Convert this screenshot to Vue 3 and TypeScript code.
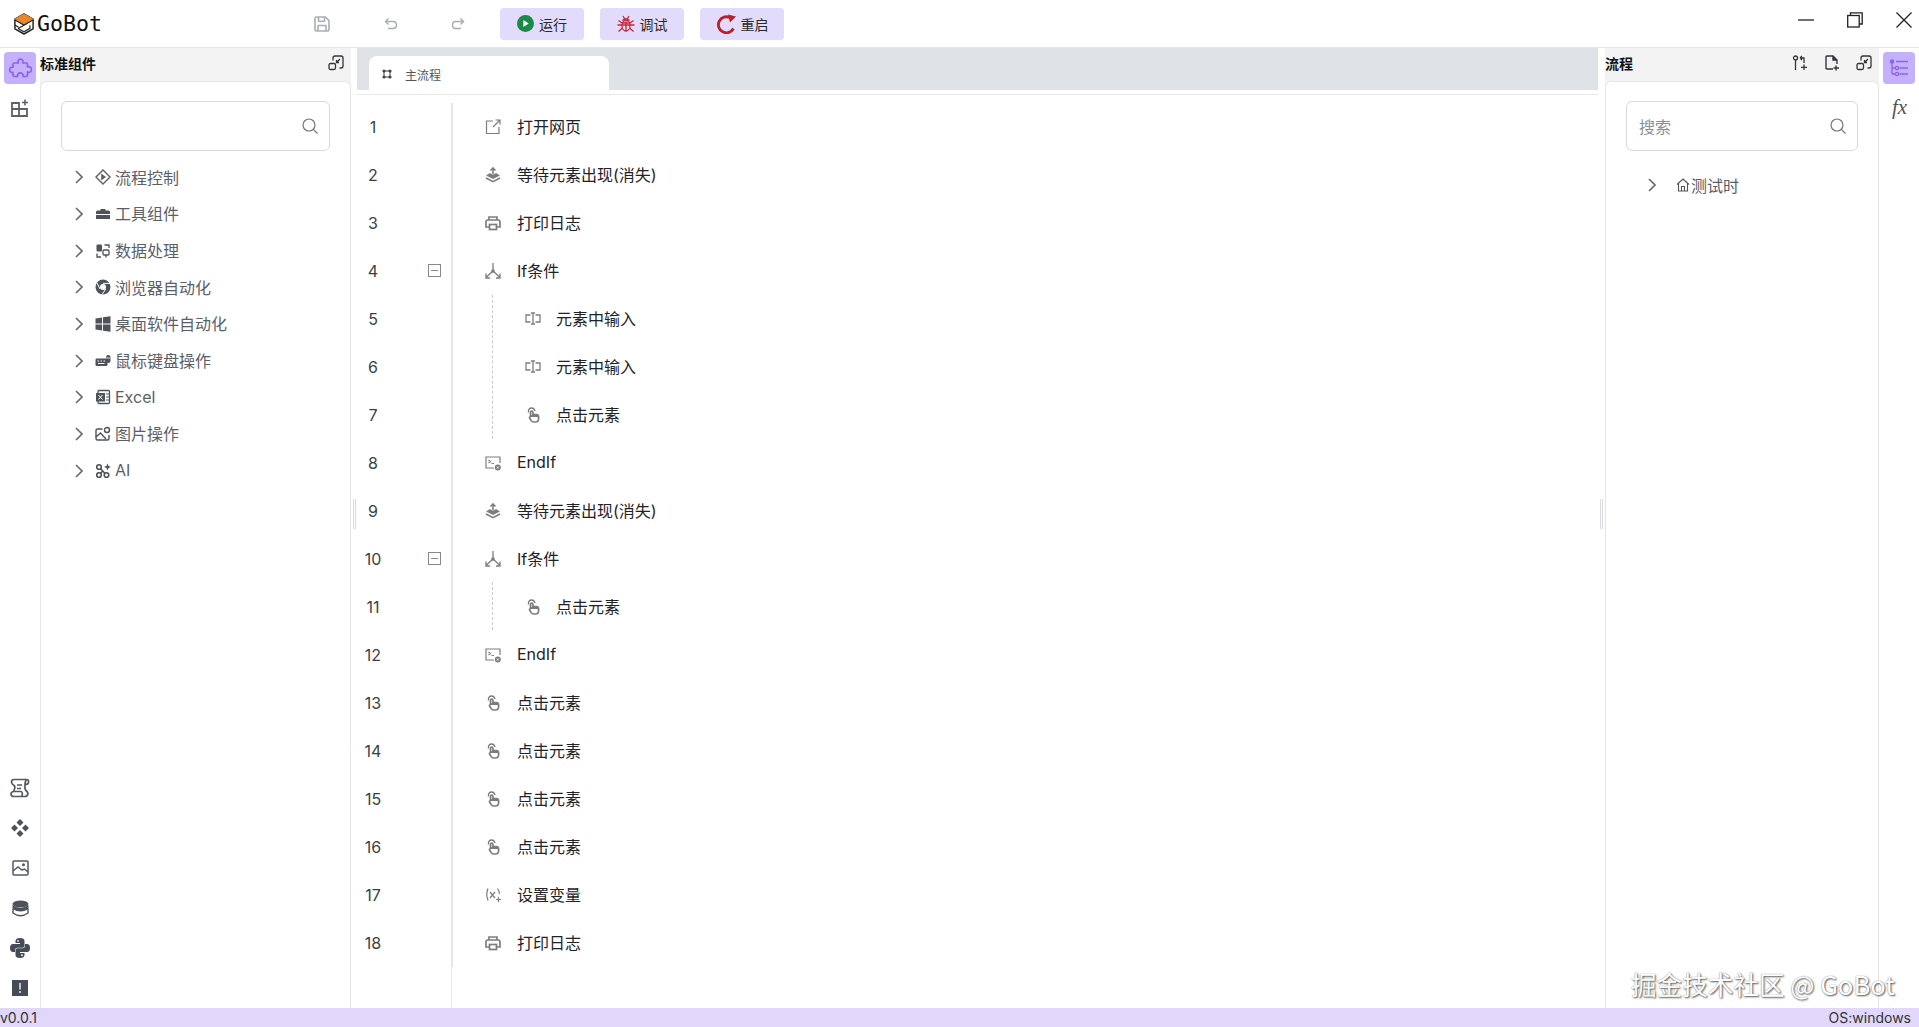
<script setup lang="ts">
type Row = { n: number; icon: string; text: string; indent?: boolean; fold?: boolean }
const rows: Row[] = [
  { n: 1, icon: 'open', text: '打开网页' },
  { n: 2, icon: 'wait', text: '等待元素出现(消失)' },
  { n: 3, icon: 'print', text: '打印日志' },
  { n: 4, icon: 'fork', text: 'If条件', fold: true },
  { n: 5, icon: 'input', text: '元素中输入', indent: true },
  { n: 6, icon: 'input', text: '元素中输入', indent: true },
  { n: 7, icon: 'click', text: '点击元素', indent: true },
  { n: 8, icon: 'end', text: 'EndIf' },
  { n: 9, icon: 'wait', text: '等待元素出现(消失)' },
  { n: 10, icon: 'fork', text: 'If条件', fold: true },
  { n: 11, icon: 'click', text: '点击元素', indent: true },
  { n: 12, icon: 'end', text: 'EndIf' },
  { n: 13, icon: 'click', text: '点击元素' },
  { n: 14, icon: 'click', text: '点击元素' },
  { n: 15, icon: 'click', text: '点击元素' },
  { n: 16, icon: 'click', text: '点击元素' },
  { n: 17, icon: 'var', text: '设置变量' },
  { n: 18, icon: 'print', text: '打印日志' },
]
const tree = [
  { icon: 'flow', text: '流程控制' },
  { icon: 'tool', text: '工具组件' },
  { icon: 'data', text: '数据处理' },
  { icon: 'chrome', text: '浏览器自动化' },
  { icon: 'win', text: '桌面软件自动化' },
  { icon: 'mouse', text: '鼠标键盘操作' },
  { icon: 'excel', text: 'Excel' },
  { icon: 'image', text: '图片操作' },
  { icon: 'ai', text: 'AI' },
]
</script>

<template>
  <div class="app">
    <header class="topbar">
      <div class="brand">
        <svg class="logo" viewBox="0 0 22 24" width="20" height="22">
          <path d="M11 1 L21 6.7 V17.3 L11 23 L1 17.3 V6.7 Z" fill="#fff" stroke="#222" stroke-width="1.6" stroke-linejoin="round" />
          <path d="M11 1 L21 6.7 L11 12.4 L1 6.7 Z" fill="#e8872b" stroke="#e8872b" stroke-width="1" stroke-linejoin="round" />
          <path d="M1 7.5 L11 13.2 L21 7.5 M4.5 17 L14 11.8 M4.5 17 L11 20.5 L17.5 16.8 V13.5 M1 13 L5 15.5" fill="none" stroke="#222" stroke-width="1.3" />
        </svg>
        <span class="brand-name">GoBot</span>
      </div>
      <div class="tools">
        <button class="tool save" aria-label="保存">
          <svg viewBox="0 0 18 18" width="18" height="18" fill="none" stroke="#a9adb3" stroke-width="1.6" stroke-linejoin="round">
            <path d="M2 3.2 Q2 2 3.2 2 H12.5 L16 5.5 V14.8 Q16 16 14.8 16 H3.2 Q2 16 2 14.8 Z" />
            <path d="M5.5 2 V6.2 H11.5 V2 M5 16 V10.5 H13 V16" />
          </svg>
        </button>
        <button class="tool undo" aria-label="撤销">
          <svg viewBox="0 0 14 14" width="14" height="14" fill="none" stroke="#a9adb3" stroke-width="1.4">
            <path d="M4.5 1.5 L1.5 4.5 L4.5 7.5 M1.5 4.5 H9 Q12.5 4.5 12.5 8 Q12.5 11.5 9 11.5 H4" />
          </svg>
        </button>
        <button class="tool redo" aria-label="重做">
          <svg viewBox="0 0 14 14" width="14" height="14" fill="none" stroke="#a9adb3" stroke-width="1.4">
            <path d="M9.5 1.5 L12.5 4.5 L9.5 7.5 M12.5 4.5 H5 Q1.5 4.5 1.5 8 Q1.5 11.5 5 11.5 H10" />
          </svg>
        </button>
        <button class="action run">
          <svg viewBox="0 0 16 16" width="17" height="17"><circle cx="8" cy="8" r="8" fill="#1a8a4a" /><path d="M6 4.7 L11 8 L6 11.3 Z" fill="#fff" /></svg>
          <span>运行</span>
        </button>
        <button class="action debug">
          <svg viewBox="0 0 18 18" width="18" height="18" fill="none" stroke="#c22a3a" stroke-width="1.3">
            <ellipse cx="9" cy="10.5" rx="4" ry="5.5" />
            <path d="M5.5 5.5 Q9 2 12.5 5.5 M6 1 L7.5 3.5 M12 1 L10.5 3.5 M0.5 10 H17.5 M1.5 5.5 L5 8 M16.5 5.5 L13 8 M1.5 16.5 L5.5 13 M16.5 16.5 L12.5 13 M9 5.5 V16 M5.5 8 H12.5" />
          </svg>
          <span>调试</span>
        </button>
        <button class="action restart">
          <svg viewBox="0 0 20 20" width="20" height="20" fill="none">
            <path d="M17.5 14.5 A8 8 0 1 1 14 3.6" stroke="#b8202c" stroke-width="2.8" />
            <path d="M12 0.5 L20 2.5 L14 8.5 Z" fill="#b8202c" />
          </svg>
          <span>重启</span>
        </button>
      </div>
      <div class="winctl">
        <svg viewBox="0 0 16 16" width="16" height="16" stroke="#222" stroke-width="1.3" fill="none"><path d="M0 8 H16" /></svg>
        <svg viewBox="0 0 16 16" width="16" height="16" stroke="#222" stroke-width="1.3" fill="none"><rect x="0.7" y="3.5" width="11.5" height="11.5" /><path d="M3.5 3.5 V0.8 H15.2 V12 H12.2" /></svg>
        <svg viewBox="0 0 16 16" width="16" height="16" stroke="#222" stroke-width="1.3" fill="none"><path d="M0.5 0.5 L15.5 15.5 M15.5 0.5 L0.5 15.5" /></svg>
      </div>
    </header>

    <div class="body">
      <nav class="rail">
        <div class="rail-top">
          <div class="rail-btn active">
            <svg viewBox="0 0 24 24" width="24" height="24" fill="none" stroke="#8b63f0" stroke-width="1.7" stroke-linejoin="round">
              <path d="M10 5 a2.6 2.6 0 0 1 5 0.2 L14.6 7 H18 a1.5 1.5 0 0 1 1.5 1.5 V11 a2.8 2.8 0 1 1 0 5 V19 a1.5 1.5 0 0 1 -1.5 1.5 H15 a2.8 2.8 0 1 0 -5.4 0 H6.5 A1.5 1.5 0 0 1 5 19 V16.4 a2.7 2.7 0 1 1 0 -5.2 V8.5 A1.5 1.5 0 0 1 6.5 7 H10.4 Z" />
            </svg>
          </div>
          <div class="rail-btn">
            <svg viewBox="0 0 18 18" width="18" height="18" fill="none" stroke="#5d6168" stroke-width="1.8">
              <path d="M1 4 H8 V17 H1 Z M8 10 H16 V17 H8 Z M1 10 H8" />
              <path d="M14 0.5 V6.5 M11 3.5 H17" stroke-width="1.6" />
            </svg>
          </div>
        </div>
        <div class="rail-bottom">
          <div class="rail-btn">
            <svg viewBox="0 0 20 20" width="20" height="20" fill="none" stroke="#555a62" stroke-width="1.7">
              <path d="M4 1.5 H16.5 Q19 1.5 18.5 4.5 Q18 6.5 15.5 6.5 M4 1.5 Q1.5 1.5 1.5 4 Q1.5 6 4 7.5 Q5.5 8.5 4.5 11 L3.5 13.5 Q1 14 1 16 Q1 18.5 4 18.5 H15 Q17.5 18.5 18 15.5 Q17.5 13.5 15.5 12 Q14.5 10 15 6 Q15 4 16.5 1.5 M3.5 13.5 H11 Q13 14 12 18 M7 7 H12 M7 10.5 H11" />
            </svg>
          </div>
          <div class="rail-btn">
            <svg viewBox="0 0 18 18" width="18" height="18" fill="#4d525b"><path d="M9 0 L12.5 3.5 L9 7 L5.5 3.5 Z M3.5 5.5 L7 9 L3.5 12.5 L0 9 Z M14.5 5.5 L18 9 L14.5 12.5 L11 9 Z M9 11 L12.5 14.5 L9 18 L5.5 14.5 Z" /></svg>
          </div>
          <div class="rail-btn">
            <svg viewBox="0 0 17 16" width="17" height="16" fill="none" stroke="#555a62" stroke-width="1.5"><rect x="1" y="1" width="15" height="14" rx="1" /><path d="M1 11 L6 7 L10.5 10.5 M10 10 L12.5 9 L16 12" /><circle cx="11.5" cy="4.8" r="1.5" fill="#555a62" stroke="none" /></svg>
          </div>
          <div class="rail-btn">
            <svg viewBox="0 0 17 17" width="17" height="17"><ellipse cx="8.5" cy="4" rx="8" ry="3.5" fill="#4d525b" /><path d="M0.5 5 Q8.5 11 16.5 5 V9 Q8.5 14 0.5 9 Z" fill="#4d525b" /><path d="M1 9 V13 Q8.5 18.5 16 13 V9" fill="none" stroke="#4d525b" stroke-width="1.4" /></svg>
          </div>
          <div class="rail-btn">
            <svg viewBox="0 0 20 20" width="20" height="20" fill="#464c57">
              <path d="M10 0 Q14.5 0 14.5 3 V8 Q14.5 9.8 12.5 9.8 H7.5 Q5 9.8 5 12.5 V14 H3 Q0 14 0 10 Q0 6 3 6 H10 V5 H5.5 V3 Q5.5 0 10 0 Z" />
              <path d="M10 20 Q5.5 20 5.5 17 V12 Q5.5 10.2 7.5 10.2 H12.5 Q15 10.2 15 7.5 V6 H17 Q20 6 20 10 Q20 14 17 14 H10 V15 H14.5 V17 Q14.5 20 10 20 Z" />
              <circle cx="8" cy="2.8" r="0.9" fill="#fff" /><circle cx="12" cy="17.2" r="0.9" fill="#fff" />
            </svg>
          </div>
          <div class="rail-btn">
            <svg viewBox="0 0 16 16" width="16" height="16"><rect width="16" height="16" fill="#464c57" /><path d="M7.2 3 H8.8 V9.5 H7.2 Z M7.2 11 H8.8 V13 H7.2 Z" fill="#dfe1e5" /></svg>
          </div>
        </div>
      </nav>

      <aside class="panel left">
        <div class="panel-head">
          <span class="panel-title">标准组件</span>
          <div class="head-icons">
            <svg class="collapse" viewBox="0 0 16 16" width="16" height="16" fill="none" stroke="#33363b" stroke-width="1.3"><path d="M5 5.5 V3 Q5 1 7 1 H13 Q15 1 15 3 V11 Q15 13 13 13 H11.5" /><rect x="1" y="8.5" width="6.5" height="6" rx="1.5" /><path d="M12 4 L8.5 7.5 M8.5 5 V7.5 H11" /></svg>
          </div>
        </div>
        <div class="panel-card">
          <div class="search">
            <span class="placeholder"></span>
            <svg viewBox="0 0 16 16" width="16" height="16" fill="none" stroke="#70757c" stroke-width="1.2"><circle cx="7" cy="7" r="6" /><path d="M11.3 11.3 L15.5 15.5" /></svg>
          </div>
          <ul class="tree">
            <li v-for="t in tree" :key="t.text" class="tree-row">
              <svg class="chev" viewBox="0 0 8 14" width="8" height="14" fill="none" stroke="#666a70" stroke-width="1.6"><path d="M1 1 L7 7 L1 13" /></svg>
              <svg class="tree-ic" viewBox="0 0 16 16" width="16" height="16">
                <template v-if="t.icon === 'flow'">
                  <path d="M8 1 L15 8 L8 15 L1 8 Z" fill="none" stroke="#5a5f68" stroke-width="1.4" />
                  <path d="M6.2 4.5 L11 8 L6.2 11.5 Z" fill="#5a5f68" />
                </template>
                <template v-else-if="t.icon === 'tool'">
                  <path d="M1 6 Q1 4.5 2.5 4.5 H5.5 V3 H10.5 V4.5 H13.5 Q15 4.5 15 6 V8 H1 Z M1 9 H15 V13 H1 Z" fill="#4d525b" />
                </template>
                <template v-else-if="t.icon === 'data'">
                  <rect x="1.5" y="1.5" width="5.5" height="7" rx="1" fill="#4d525b" />
                  <rect x="8" y="7" width="6" height="5" rx="1" fill="none" stroke="#4d525b" stroke-width="1.3" />
                  <path d="M9.5 2 H14 V5 M2 10.5 V14 H6 M11 12 V14.5" fill="none" stroke="#4d525b" stroke-width="1.3" />
                </template>
                <template v-else-if="t.icon === 'chrome'">
                  <circle cx="8" cy="8" r="7.5" fill="#4d525b" />
                  <circle cx="8" cy="8" r="3" fill="#fff" />
                  <path d="M8 4.4 H15 M5 10 L2 4 M10.8 10 L7 15.5" stroke="#fff" stroke-width="1" />
                </template>
                <template v-else-if="t.icon === 'win'">
                  <path d="M0.5 2.5 L7 1.5 V7.5 H0.5 Z M8 1.3 L15.5 0.3 V7.5 H8 Z M0.5 8.5 H7 V14.5 L0.5 13.5 Z M8 8.5 H15.5 V15.7 L8 14.7 Z" fill="#4d525b" />
                </template>
                <template v-else-if="t.icon === 'mouse'">
                  <rect x="0.5" y="5.5" width="12" height="7.5" rx="1.2" fill="#4d525b" />
                  <path d="M2.5 8 H4 M5.5 8 H7 M8.5 8 H10 M3 10.5 H9.5" stroke="#fff" stroke-width="1" />
                  <rect x="11" y="2" width="4.5" height="8" rx="2.2" fill="#4d525b" />
                  <path d="M11 5 H15.5" stroke="#fff" stroke-width="0.8" />
                </template>
                <template v-else-if="t.icon === 'excel'">
                  <rect x="3" y="1.5" width="11.5" height="13" rx="1" fill="none" stroke="#4d525b" stroke-width="1.3" />
                  <rect x="1" y="4" width="9" height="8.5" fill="#4d525b" />
                  <path d="M3.5 6 L7.5 10.5 M7.5 6 L3.5 10.5" stroke="#fff" stroke-width="1" />
                  <path d="M11 5 H14 M11 8 H14 M11 11 H14" stroke="#4d525b" stroke-width="1" />
                </template>
                <template v-else-if="t.icon === 'image'">
                  <path d="M7.5 3 H2.5 Q1 3 1 4.5 V12.5 Q1 14 2.5 14 H12.5 Q14 14 14 12.5 V9" fill="none" stroke="#4d525b" stroke-width="1.4" />
                  <path d="M1 11 L5.5 7 L11 13" fill="none" stroke="#4d525b" stroke-width="1.4" />
                  <circle cx="12" cy="4" r="2.5" fill="none" stroke="#4d525b" stroke-width="1.4" />
                </template>
                <template v-else>
                  <circle cx="4" cy="4" r="2.3" fill="none" stroke="#4d525b" stroke-width="1.6" />
                  <circle cx="4" cy="12" r="2.3" fill="none" stroke="#4d525b" stroke-width="1.6" />
                  <circle cx="11.5" cy="12" r="2.3" fill="none" stroke="#4d525b" stroke-width="1.6" />
                  <path d="M5.5 5.5 L10 10.5 M5.5 10.5 L8 7.5" stroke="#4d525b" stroke-width="1.5" />
                  <path d="M12.5 0.5 L13.5 3 L16 4 L13.5 5 L12.5 7.5 L11.5 5 L9 4 L11.5 3 Z" fill="#4d525b" />
                </template>
              </svg>
              <span class="tree-text">{{ t.text }}</span>
            </li>
          </ul>
        </div>
      </aside>

      <div class="split"><i></i></div>

      <main class="center">
        <div class="tabs">
          <div class="tab">
            <svg viewBox="0 0 10 10" width="10" height="10" fill="#444"><circle cx="2" cy="2" r="1.6" /><circle cx="8" cy="2" r="1.6" /><circle cx="2" cy="8" r="1.6" /><circle cx="8" cy="8" r="1.6" /><path d="M2 1.5 H8 V2.5 H2 Z M2 7.5 H8 V8.5 H2 Z M1.5 2 H2.5 V8 H1.5 Z M7.5 2 H8.5 V8 H7.5 Z" /></svg>
            <span>主流程</span>
          </div>
        </div>
        <div class="editor">
          <div v-for="r in rows" :key="r.n" class="row" :class="{ child: r.indent }">
            <div class="gutter">
              <span class="num">{{ r.n }}</span>
              <span v-if="r.fold" class="fold"><i></i></span>
            </div>
            <div class="code">
              <svg class="ic" viewBox="0 0 16 16" width="16" height="16" fill="none" stroke="#7a7d82" stroke-width="1.2">
                <template v-if="r.icon === 'open'">
                  <path d="M8 2 H1.5 V14.5 H14 V8" /><path d="M8 8 L15 1 M10.5 1 H15 V5.5" />
                </template>
                <template v-else-if="r.icon === 'wait'">
                  <path d="M8 1 V7.5 M5.5 3.5 L8 1 L10.5 3.5" stroke-width="1.6" />
                  <path d="M5 6 L1 8.5 L8 12 L15 8.5 L11 6 L8 8 Z" fill="#7a7d82" stroke="none" />
                  <path d="M1 11 L8 14.7 L15 11" stroke-width="1.6" />
                </template>
                <template v-else-if="r.icon === 'print'">
                  <path d="M4 5 V2 H12 V5 M4 12 H1 V7 Q1 5 3 5 H13 Q15 5 15 7 V12 H12" stroke-width="1.7" />
                  <rect x="4.5" y="9.5" width="7" height="5" stroke-width="1.7" />
                </template>
                <template v-else-if="r.icon === 'fork'">
                  <path d="M8 0 V8 M8 8 L1.5 14 M8 8 L14.5 14 M1 10.5 V15 H5 M15 10.5 V15 H11" stroke-width="1.3" />
                  <circle cx="8" cy="8" r="1.8" fill="#7a7d82" stroke="none" />
                </template>
                <template v-else-if="r.icon === 'input'">
                  <path d="M5.5 4 H1 V11 H5.5 M10.5 4 H15 V11 H10.5 M6 2 H10 M6 13 H10 M8 2 V13" stroke-width="1.3" />
                </template>
                <template v-else-if="r.icon === 'click'">
                  <path d="M5.5 9 V5.5 Q5.5 4 6.7 4 Q7.9 4 7.9 5.5 V7.5 H11.5 Q13.6 7.5 13.6 10 V11.5 Q13.6 15 10.5 15 H8.5 Q6.5 15 5.5 12.5 L4.5 10.5 Z" stroke-width="1.7" />
                  <path d="M3.5 5.5 Q3 1 6.7 1 Q9.5 1 9.8 4" stroke-width="1.4" />
                  <path d="M6 8 H13 V10 H6 Z" fill="#7a7d82" stroke="none" />
                </template>
                <template v-else-if="r.icon === 'end'">
                  <path d="M9 13 H1 V2 H15 V8" stroke-width="1.2" />
                  <path d="M3.5 5 L5.5 6.5 L3.5 8 M6.5 8.5 H9" />
                  <circle cx="12.8" cy="12.5" r="3" fill="#7a7d82" stroke="none" />
                  <path d="M11.7 11.4 L13.9 13.6 M13.9 11.4 L11.7 13.6" stroke="#fff" stroke-width="0.8" />
                </template>
                <template v-else>
                  <path d="M3 1.5 Q0.5 7 3 13.5 M12.5 1.5 Q14.5 4 14.3 7" />
                  <path d="M5 5 L10 11 M10 5 L5 11" />
                  <path d="M13.5 10 V15 M11 12.5 H16" />
                </template>
              </svg>
              <span class="label">{{ r.text }}</span>
            </div>
          </div>
          <div class="guide g1"></div>
          <div class="guide g2"></div>
        </div>
      </main>

      <div class="split right"><i></i></div>

      <aside class="panel flowpanel">
        <div class="panel-head">
          <span class="panel-title">流程</span>
          <div class="head-icons three">
            <svg viewBox="0 0 16 16" width="16" height="16" fill="none" stroke="#33363b" stroke-width="1.3"><circle cx="3.5" cy="3" r="2" /><path d="M3.5 5 V15 M8 3 H12 V8 M8 3 L10 1 M8 3 L10 5 M12 9.5 V15 M9 12.3 H15" /></svg>
            <svg viewBox="0 0 16 16" width="16" height="16" fill="none" stroke="#33363b" stroke-width="1.4"><path d="M9 14 H3 Q2 14 2 13 V2 Q2 1 3 1 H9 L13 5 V9" /><path d="M9 1 V5 H13" fill="#33363b" /><path d="M12 10.5 V15.5 M9.5 13 H15" /></svg>
            <svg class="collapse" viewBox="0 0 16 16" width="16" height="16" fill="none" stroke="#33363b" stroke-width="1.3"><path d="M5 5.5 V3 Q5 1 7 1 H13 Q15 1 15 3 V11 Q15 13 13 13 H11.5" /><rect x="1" y="8.5" width="6.5" height="6" rx="1.5" /><path d="M12 4 L8.5 7.5 M8.5 5 V7.5 H11" /></svg>
          </div>
        </div>
        <div class="panel-card">
          <div class="search">
            <span class="placeholder">搜索</span>
            <svg viewBox="0 0 16 16" width="16" height="16" fill="none" stroke="#70757c" stroke-width="1.2"><circle cx="7" cy="7" r="6" /><path d="M11.3 11.3 L15.5 15.5" /></svg>
          </div>
          <div class="flow-row">
            <svg class="chev" viewBox="0 0 8 14" width="8" height="14" fill="none" stroke="#666a70" stroke-width="1.6"><path d="M1 1 L7 7 L1 13" /></svg>
            <svg class="home" viewBox="0 0 14 14" width="14" height="14" fill="none" stroke="#555" stroke-width="1.1"><path d="M1 6.5 L7 1 L13 6.5 M2.5 5.5 V13 H11.5 V5.5 M5.5 13 V8.5 H8.5 V13" /></svg>
            <span class="tree-text">测试时</span>
          </div>
        </div>
      </aside>

      <nav class="rail rail-right">
        <div class="rail-top">
          <div class="rail-btn active">
            <svg viewBox="0 0 20 18" width="20" height="18" fill="none" stroke="#8b63f0" stroke-width="1.3">
              <circle cx="3" cy="2.5" r="1.6" fill="#8b63f0" />
              <path d="M3 4 V15 M3 9 H6 M3 15 H6 M7 2.5 H19 M10.5 9 H19 M10.5 15 H19" />
              <circle cx="8" cy="9" r="1.6" /><circle cx="8" cy="15" r="1.6" />
            </svg>
          </div>
          <div class="rail-btn fx">fx</div>
        </div>
      </nav>
    </div>

    <footer class="status">
      <span>v0.0.1</span>
      <span>OS:windows</span>
    </footer>

    <div class="watermark">掘金技术社区 @ GoBot</div>
  </div>
</template>

<style>
html, body { margin: 0; padding: 0; background: #fff; overflow: hidden; }
</style>

<style scoped>
.app {
  position: relative;
  width: 1919px;
  height: 1027px;
  display: flex;
  flex-direction: column;
  overflow: hidden;
  font-family: Inter, "Noto Sans CJK SC", sans-serif;
  color: #1f2329;
  background: #fff;
}
button { border: 0; background: none; padding: 0; font: inherit; color: inherit; }
ul { list-style: none; margin: 0; padding: 0; }

.topbar {
  height: 47px;
  flex: none;
  display: flex;
  align-items: center;
  border-bottom: 1px solid #e6e6e7;
  box-sizing: content-box;
}
.brand { width: 313px; padding-left: 14px; box-sizing: border-box; display: flex; align-items: center; gap: 3px; flex: none; }
.logo { flex: none; }
.brand-name { font-family: "DejaVu Sans Mono", monospace; font-size: 21.6px; color: #111; line-height: 24px; }
.tools { display: flex; align-items: center; flex: 1; }
.tool { width: 18px; height: 18px; display: flex; align-items: center; justify-content: center; }
.save { margin-right: 51px; }
.undo { margin-right: 49px; }
.redo { margin-right: 33px; }
.action {
  height: 32px;
  width: 84px;
  margin-right: 16px;
  border-radius: 4px;
  background: #e2dbfb;
  display: flex;
  align-items: center;
  justify-content: center;
  gap: 5px;
  font-size: 14px;
  color: #2a2a2a;
}
.winctl { display: flex; align-items: center; gap: 33px; padding-right: 7px; position: relative; top: -4px; }

.body { flex: 1; display: flex; min-height: 0; }
.rail {
  width: 40px;
  flex: none;
  display: flex;
  flex-direction: column;
  justify-content: space-between;
  align-items: center;
  padding: 4px 0 4px;
  box-sizing: border-box;
}
.rail-top { display: flex; flex-direction: column; gap: 8px; }
.rail-bottom { display: flex; flex-direction: column; gap: 8px; }
.rail-btn { width: 32px; height: 32px; display: flex; align-items: center; justify-content: center; border-radius: 4px; }
.rail-btn.active { background: #c5b0fb; }
.fx { font-family: "Liberation Serif", serif; font-style: italic; font-size: 21px; color: #555; padding: 0 0 2px 1px; box-sizing: border-box; }

.panel { flex: none; display: flex; flex-direction: column; background: #f3f3f4; }
.panel.left { width: 311px; }
.flowpanel { width: 274px; }
.panel-head {
  height: 33px;
  flex: none;
  display: flex;
  align-items: center;
  justify-content: space-between;
  padding: 0 7px 3px 0;
  box-sizing: border-box;
}
.panel-title { font-size: 14px; font-weight: 700; color: #111; }
.head-icons { display: flex; align-items: center; }
.head-icons.three { gap: 16px; }
.panel-card {
  flex: 1;
  background: #fff;
  border: 1px solid #e6e6e7;
  border-bottom: 0;
  border-radius: 6px 6px 0 0;
  padding: 19px 20px 0;
  box-sizing: border-box;
}
.search {
  height: 50px;
  border: 1px solid #d9d9dc;
  border-radius: 6px;
  box-sizing: border-box;
  display: flex;
  align-items: center;
  justify-content: space-between;
  padding: 0 11px 0 12px;
}
.placeholder { font-size: 16px; color: #8a8f97; }
.tree { margin-top: 8px; }
.tree-row { height: 36.67px; display: flex; align-items: center; padding-left: 14px; }
.chev { flex: none; }
.tree-ic { flex: none; margin-left: 12px; margin-right: 4px; }
.tree-text { font-size: 16px; color: #5b6068; white-space: nowrap; margin-bottom: 1px; }
.flow-row { display: flex; align-items: center; height: 36px; margin-top: 16px; padding-left: 22px; }
.home { flex: none; margin-left: 20px; margin-right: 1px; }

.split { width: 6px; flex: none; display: flex; align-items: center; justify-content: center; }
.split.right { width: 7px; }
.split i { display: block; width: 3px; height: 30px; border-left: 1px solid #d9dadd; border-right: 1px solid #d9dadd; box-sizing: border-box; position: relative; top: -14px; }

.center { flex: 1; min-width: 0; display: flex; flex-direction: column; }
.tabs { height: 42px; flex: none; background: #dfe2e7; padding: 8px 0 0 12px; box-sizing: border-box; }
.tab {
  width: 240px;
  height: 34px;
  box-sizing: border-box;
  background: #fff;
  border-radius: 8px 8px 0 0;
  display: flex;
  align-items: center;
  gap: 13px;
  padding: 2px 0 0 13px;
  font-size: 12px;
  color: #555;
}
.editor {
  flex: 1;
  position: relative;
  margin-top: 4px;
  border-top: 1px solid #e8e8e9;
  padding-top: 8px;
}
.editor::before {
  content: "";
  position: absolute;
  left: 94px;
  top: 8px;
  bottom: 0;
  width: 1px;
  background: #e6e6e7;
}
.row { height: 48px; display: flex; align-items: center; }
.gutter { width: 93px; margin-left: 1px; height: 100%; flex: none; display: flex; align-items: center; position: relative; border-right: 2px solid #e6e6e7; box-sizing: content-box; }
.num { width: 30px; text-align: center; font-size: 16px; color: #3a3f45; }
.fold {
  position: absolute;
  left: 70px;
  top: 17px;
  width: 13px;
  height: 13px;
  border: 1px solid #85888d;
  box-sizing: border-box;
  display: flex;
  align-items: center;
  justify-content: center;
}
.fold i { width: 7px; height: 1px; background: #85888d; display: block; }
.code { display: flex; align-items: center; padding-left: 32px; }
.child .code { padding-left: 72px; }
.ic { flex: none; margin-right: 16px; }
.child .ic { margin-right: 15px; }
.label { font-size: 16px; color: #1f2329; white-space: nowrap; margin-bottom: 2px; }
.guide { position: absolute; left: 135px; width: 0; border-left: 1px dashed #c9cacc; }
.g1 { top: 200px; height: 144px; }
.g2 { top: 487px; height: 48px; }

.status {
  height: 19px;
  flex: none;
  background: #e0d7fb;
  display: flex;
  align-items: center;
  justify-content: space-between;
  padding-right: 8px;
  font-size: 14px;
  color: #333;
  position: relative;
}
.watermark {
  position: absolute;
  left: 1631px;
  top: 968px;
  font-size: 25.6px;
  line-height: 32px;
  white-space: nowrap;
  color: #fff;
  text-shadow: 1px 1px 2px #555, 0 0 1px #777;
  font-family: "Noto Sans CJK SC", sans-serif;
}
</style>
